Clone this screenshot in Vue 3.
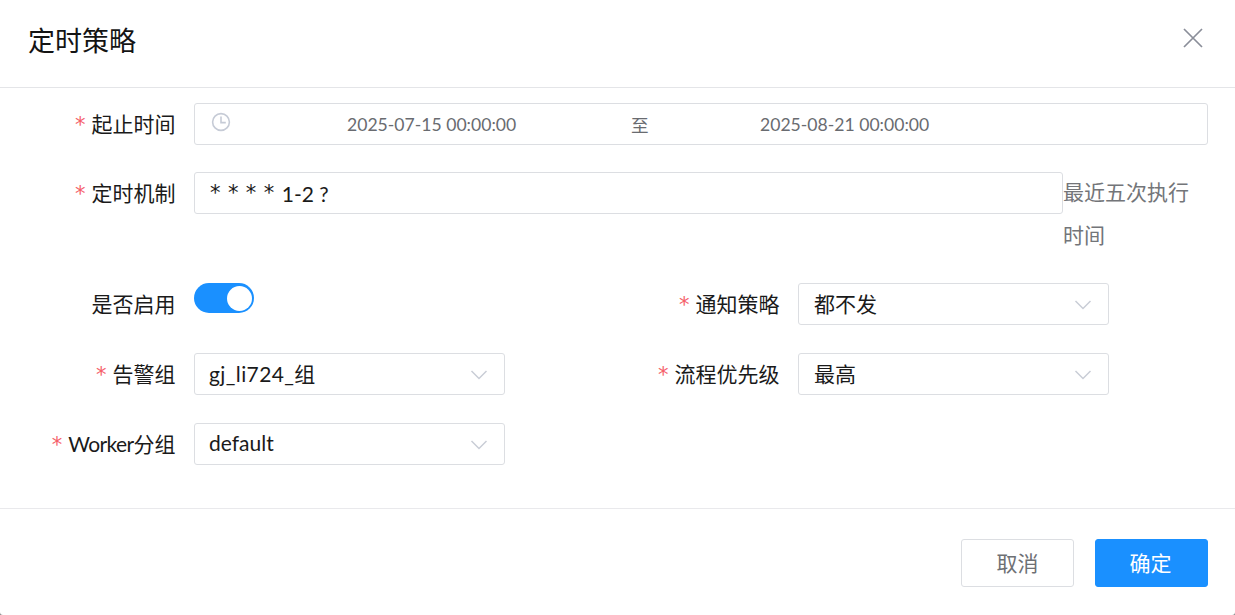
<script setup>
const leftRows = [
  { key: 'alarm', label: '告警组', value: 'gj_li724_组', cls: 'spaced' },
  { key: 'worker', prefix: 'Worker', label: '分组', value: 'default', cls: '' }
]
</script>

<template>
  <div class="dialog">
    <header class="head">
      <h2 class="title">定时策略</h2>
      <svg class="close" width="22" height="22" viewBox="0 0 22 22" fill="none" stroke="#8a8e99" stroke-width="1.7">
        <path d="M2 2 L20 20 M20 2 L2 20" />
      </svg>
    </header>
    <main class="body">
      <div class="row row-date">
        <label class="label"><i>*</i>起止时间</label>
        <div class="box date">
          <svg class="clock" width="20" height="20" viewBox="0 0 20 20" fill="none" stroke="#c6cbd6" stroke-width="1.6">
            <circle cx="10" cy="10" r="8.4" />
            <path d="M10 4.6 V10.6 H14.8" />
          </svg>
          <span class="d1">2025-07-15 00:00:00</span>
          <span class="d2">至</span>
          <span class="d3">2025-08-21 00:00:00</span>
        </div>
      </div>
      <div class="row row-cron">
        <label class="label"><i>*</i>定时机制</label>
        <div class="box cron"><span class="stars">* * * * </span><span>1-2 ?</span></div>
        <a class="recent">最近五次执行时间</a>
      </div>
      <div class="grid">
        <div class="col">
          <div class="row row-switch">
            <label class="label">是否启用</label>
            <div class="switch"><span class="knob"></span></div>
          </div>
          <div v-for="r in leftRows" :key="r.key" class="row row-sel">
            <label class="label"><i>*</i><span v-if="r.prefix" class="tight">{{ r.prefix }}</span>{{ r.label }}</label>
            <div class="box select">
              <span class="val" :class="r.cls">{{ r.value }}</span>
              <svg class="arrow" width="18" height="10" viewBox="0 0 18 10" fill="none" stroke="#c9cdd6" stroke-width="1.5"><path d="M1.5 1 L9 8.5 L16.5 1" /></svg>
            </div>
          </div>
        </div>
        <div class="col">
          <div class="row row-sel">
            <label class="label"><i>*</i>通知策略</label>
            <div class="box select cjk">
              <span class="val">都不发</span>
              <svg class="arrow" width="18" height="10" viewBox="0 0 18 10" fill="none" stroke="#c9cdd6" stroke-width="1.5"><path d="M1.5 1 L9 8.5 L16.5 1" /></svg>
            </div>
          </div>
          <div class="row row-sel">
            <label class="label"><i>*</i>流程优先级</label>
            <div class="box select cjk">
              <span class="val">最高</span>
              <svg class="arrow" width="18" height="10" viewBox="0 0 18 10" fill="none" stroke="#c9cdd6" stroke-width="1.5"><path d="M1.5 1 L9 8.5 L16.5 1" /></svg>
            </div>
          </div>
        </div>
      </div>
    </main>
    <footer class="foot">
      <button class="btn cancel">取消</button>
      <button class="btn ok">确定</button>
    </footer>
  </div>
</template>

<style>
html, body { margin: 0; background: #8c8c8c; }
</style>

<style scoped>
.dialog {
  width: 1235px;
  height: 615px;
  background: #fff;
  border-radius: 0 0 3px 3px;
  overflow: hidden;
  font-family: Lato, "Noto Sans CJK SC", sans-serif;
  font-size: 21px;
  color: #1a1a1a;
  display: flex;
  flex-direction: column;
  box-sizing: border-box;
}
.head {
  height: 88px;
  box-sizing: border-box;
  border-bottom: 1px solid #e4e5e8;
  padding: 0 32px 0 28px;
  display: flex;
  justify-content: space-between;
  align-items: flex-start;
  flex: none;
}
.title {
  margin: 22px 0 0;
  font-size: 27px;
  line-height: 38px;
  font-weight: 400;
  color: #141414;
}
.close { margin-top: 27px; margin-right: -1px; }
.body {
  flex: 1;
  padding-top: 15px;
  box-sizing: border-box;
}
.row { display: flex; align-items: flex-start; }
.label {
  width: 175.5px;
  flex: none;
  margin-right: 18.5px;
  box-sizing: border-box;
  text-align: right;
  line-height: 41px;
  white-space: nowrap;
}
.label i {
  font-style: normal;
  color: #f5606a;
  margin-right: 6px;
  font-family: "DejaVu Sans", sans-serif;
}
.tight { letter-spacing: -0.6px; }
.box {
  box-sizing: border-box;
  height: 42px;
  border: 1px solid #dcdee2;
  border-radius: 3px;
  background: #fff;
  display: flex;
  align-items: center;
}
.row-date { height: 69px; }
.date {
  width: 1014px;
  font-size: 17.6px;
  color: #696b70;
  padding-left: 16px;
  position: relative;
}
.clock { margin-top: -5px; flex: none; margin-right: 116px; }
.d1 { width: 284px; flex: none; }
.d2 { width: 129px; flex: none; }
.row-cron { height: 111px; }
.cron { width: 869px; padding-left: 15px; white-space: pre; }
.stars { font-family: "DejaVu Sans", sans-serif; word-spacing: 0.75px; }
.recent {
  width: 132px;
  margin-top: -2px;
  line-height: 43px;
  color: #737579;
}
.grid { display: grid; grid-template-columns: 604px 1fr; }
.col { display: flex; flex-direction: column; }
.row-switch { height: 70px; }
.row-sel { height: 70px; }
.switch {
  width: 60px;
  height: 30px;
  border-radius: 15px;
  background: #1a90ff;
  position: relative;
}
.knob {
  position: absolute;
  right: 2px;
  top: 2.5px;
  width: 25px;
  height: 25px;
  border-radius: 50%;
  background: #fff;
}
.select {
  width: 311px;
  padding: 0 16px 0 14px;
  justify-content: space-between;
}
.select.cjk { padding-left: 15px; }
.val { margin-top: -3px; }
.spaced { letter-spacing: 0.4px; }
.arrow { margin-top: 2px; }
.foot {
  height: 107px;
  box-sizing: border-box;
  flex: none;
  border-top: 1px solid #e9e9ec;
  padding: 30px 27px 0 0;
  display: flex;
  justify-content: flex-end;
  align-items: flex-start;
  gap: 21px;
}
.btn {
  width: 113px;
  height: 48px;
  border-radius: 3px;
  font: inherit;
  padding: 0 0 2px;
}
.cancel { background: #fff; border: 1px solid #dcdee2; color: #6e7074; }
.ok { background: #1a90ff; border: 1px solid #1a90ff; color: #fff; padding-right: 2px; }
</style>
